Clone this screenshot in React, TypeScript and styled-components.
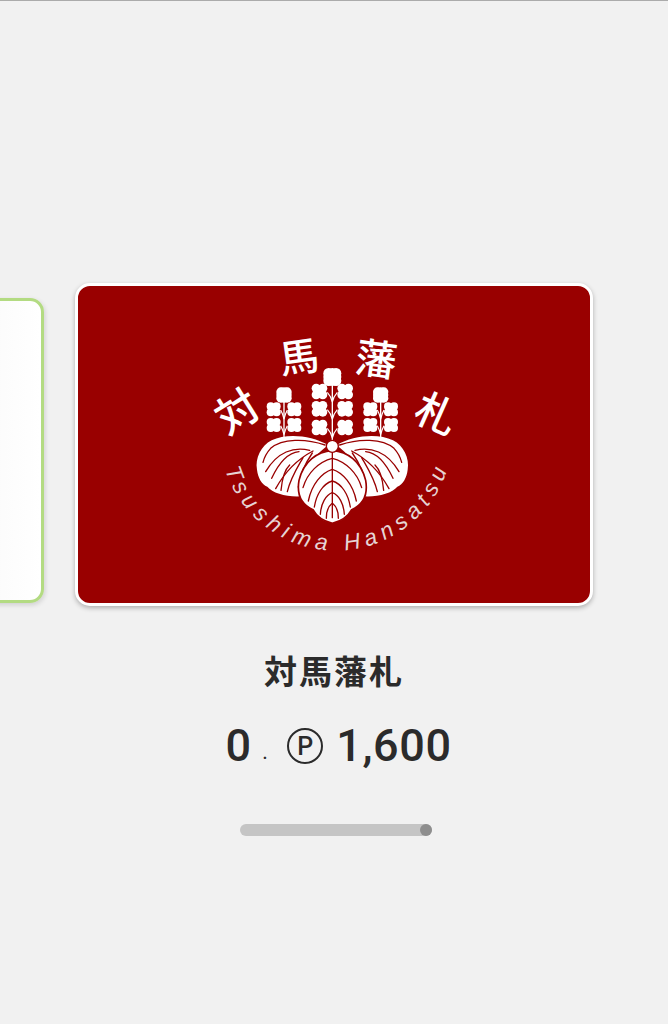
import { createGlobalStyle } from "styled-components";
import styled from "styled-components";

const GlobalStyle = createGlobalStyle`
  html, body {
    margin: 0;
    height: 100%;
    background: #f1f1f1;
    font-family: Roboto, "Noto Sans CJK JP", sans-serif;
    color: #2b2b2b;
  }
`;

const Page = styled.div`
  width: 668px;
  height: 1024px;
  overflow: hidden;
  display: flex;
  flex-direction: column;
  align-items: center;
`;

const TopLine = styled.div`
  width: 100%;
  height: 1px;
  background: #ababab;
  flex-shrink: 0;
`;

const Carousel = styled.div`
  width: 100%;
  margin-top: 282px;
  display: flex;
  align-items: flex-start;
  gap: 31px;
`;

const PrevCard = styled.div`
  box-sizing: border-box;
  flex-shrink: 0;
  width: 144px;
  height: 305px;
  margin-top: 15px;
  margin-left: -100px;
  background: linear-gradient(90deg, #f4f4f4, #ffffff);
  border: 3px solid #b3db82;
  border-radius: 14px;
  box-shadow: 1px 2px 5px rgba(0, 0, 0, 0.14);
`;

const Card = styled.div`
  box-sizing: border-box;
  flex-shrink: 0;
  width: 518px;
  height: 323px;
  background: #990000;
  border: 3px solid #ffffff;
  border-radius: 15px;
  box-shadow: 0 2px 5px rgba(0, 0, 0, 0.28);
  display: flex;
  align-items: flex-start;
  justify-content: center;
`;

const Logo = styled.svg`
  width: 270px;
  height: 240px;
  margin-top: 35px;
  margin-right: 1px;
  display: block;
`;

const Title = styled.div`
  margin-top: 41px;
  font-family: "Noto Sans CJK JP", sans-serif;
  font-size: 33px;
  font-weight: 700;
  line-height: 46px;
  letter-spacing: 2px;
`;

const Balance = styled.div`
  margin-top: 26px;
  margin-left: 9px;
  height: 54px;
  display: flex;
  align-items: center;
  font-size: 45px;
  font-weight: 500;
  letter-spacing: 0.6px;
  line-height: 54px;
`;

const Dot = styled.span`
  font-size: 18px;
  margin: 14px 19px 0 11px;
`;

const PointMark = styled.span`
  box-sizing: border-box;
  width: 36px;
  height: 36px;
  margin-right: 13px;
  border: 2px solid #2b2b2b;
  border-radius: 50%;
  display: flex;
  align-items: center;
  justify-content: center;
  font-size: 25px;
  font-weight: 500;
  letter-spacing: 0;
  line-height: 1;
`;

const Track = styled.div`
  margin-top: 51px;
  margin-left: 4px;
  width: 192px;
  height: 12px;
  border-radius: 6px;
  background: #c5c5c5;
  display: flex;
  justify-content: flex-end;
`;

const Thumb = styled.div`
  width: 12px;
  height: 12px;
  border-radius: 50%;
  background: #8e8e8e;
`;

const Kanji = styled.text`
  font-family: "Noto Sans CJK JP", sans-serif;
  font-weight: 500;
  fill: #ffffff;
  text-anchor: middle;
`;

const ArcText = styled.text`
  font-family: "Liberation Sans", sans-serif;
  font-style: italic;
  font-size: 68px;
  fill: #e6d4d4;
`;

// a bud: rounded square with four soft lobes, small notches between them
const Bud = ({ x, y, s }: { x: number; y: number; s: number }) => {
  const r = s * 0.29;
  return (
    <g fill="#fff">
      <rect x={x + s * 0.12} y={y + s * 0.12} width={s * 0.76} height={s * 0.76} />
      <circle cx={x + r} cy={y + r} r={r} />
      <circle cx={x + s - r} cy={y + r} r={r} />
      <circle cx={x + r} cy={y + s - r} r={r} />
      <circle cx={x + s - r} cy={y + s - r} r={r} />
    </g>
  );
};

// one stalk of the paulownia crest, rows are the pairs of buds
const Stalk = ({ cx, top, rows, s, spread, r }: { cx: number; top: number; rows: number[]; s: number; spread: number; r: number }) => (
  <g>
    <Bud x={cx - r} y={top - r} s={r * 2} />
    <circle cx={cx} cy={top} r={r} fill="#fff" />
    <path d={`M${cx} ${top} V${rows[rows.length - 1] + s + 16}`} stroke="#fff" strokeWidth="4" />
    {rows.map((y) => (
      <g key={y}>
        <Bud x={cx - spread - s} y={y} s={s} />
        <Bud x={cx + spread} y={y} s={s} />
        <path
          d={`M${cx - spread} ${y + s * 0.55} Q${cx - 4} ${y + s * 0.8} ${cx} ${y + s + 8} Q${cx + 4} ${y + s * 0.8} ${cx + spread} ${y + s * 0.55}`}
          stroke="#fff"
          strokeWidth="3.5"
          fill="none"
        />
      </g>
    ))}
  </g>
);

const SideLeaf = ({ flip }: { flip?: boolean }) => (
  <g transform={flip ? "translate(800 0) scale(-1 1)" : undefined}>
    <path
      d="M388 372 C335 342 262 336 218 358 C186 374 168 412 174 446 C177 470 188 490 205 497 C222 518 270 530 315 525 C300 470 325 420 388 372 Z"
      fill="#fff"
    />
    <g stroke="#990000" strokeWidth="4" fill="none" strokeLinecap="round">
      <path d="M378 372 C320 352 250 352 215 382 C204 394 196 408 192 424" />
      <path d="M332 388 C285 376 235 392 200 452" />
      <path d="M342 390 C300 412 258 452 230 503" />
      <path d="M300 392 C268 395 240 425 218 472" />
      <path d="M312 410 C295 440 275 470 265 512" />
      <path d="M340 396 C320 425 303 460 298 498" />
      <path d="M272 432 C258 445 250 465 246 508" />
    </g>
  </g>
);

const CenterLeaf = () => (
  <g>
    <path
      d="M400 388 C445 392 486 420 500 478 C508 525 490 552 458 566 C444 592 420 602 400 607 C380 602 356 592 342 566 C310 552 292 525 300 478 C314 420 355 392 400 388 Z"
      fill="#fff"
      stroke="#990000"
      strokeWidth="5"
    />
    <g stroke="#990000" strokeWidth="4" fill="none" strokeLinecap="round">
      <path d="M400 392 V590" />
      <path d="M400 412 C360 422 325 455 312 500" />
      <path d="M400 412 C440 422 475 455 488 500" />
      <path d="M400 445 C368 455 338 490 328 540" />
      <path d="M400 445 C432 455 462 490 472 540" />
      <path d="M400 480 C372 488 352 520 346 558" />
      <path d="M400 480 C428 488 448 520 454 558" />
      <path d="M400 515 C380 522 366 548 364 580" />
      <path d="M400 515 C420 522 434 548 436 580" />
      <path d="M398 548 C388 556 382 572 382 592" />
      <path d="M402 548 C412 556 418 572 418 592" />
    </g>
  </g>
);

const CrestLogo = () => (
  <Logo viewBox="0 0 810 720">
    <Kanji x="115" y="318" fontSize="128" transform="rotate(-32 115 272)">対</Kanji>
    <Kanji x="300" y="152" fontSize="118" transform="rotate(-8 300 110)">馬</Kanji>
    <Kanji x="532" y="160" fontSize="124" transform="rotate(8 532 117)">藩</Kanji>
    <Kanji x="712" y="324" fontSize="124" transform="rotate(24 712 280)">札</Kanji>

    <Stalk cx={400} top={168} rows={[188, 240, 296]} s={47} spread={15} r={27} />
    <Stalk cx={255} top={222} rows={[244, 291]} s={42} spread={10} r={23} />
    <Stalk cx={545} top={222} rows={[244, 291]} s={42} spread={10} r={23} />

    <SideLeaf />
    <SideLeaf flip />
    <CenterLeaf />
    <circle cx="400" cy="376" r="18" fill="#fff" stroke="#990000" strokeWidth="4" />

    <path id="crest-arc" d="M78 445 A350 350 0 0 0 745 445" fill="none" />
    <ArcText>
      <textPath href="#crest-arc" textLength="880" lengthAdjust="spacing">
        Tsushima Hansatsu
      </textPath>
    </ArcText>
  </Logo>
);

export default function App() {
  return (
    <Page>
      <GlobalStyle />
      <TopLine />
      <Carousel>
        <PrevCard />
        <Card>
          <CrestLogo />
        </Card>
      </Carousel>
      <Title>対馬藩札</Title>
      <Balance>
        0<Dot>.</Dot>
        <PointMark>P</PointMark>
        1,600
      </Balance>
      <Track>
        <Thumb />
      </Track>
    </Page>
  );
}
